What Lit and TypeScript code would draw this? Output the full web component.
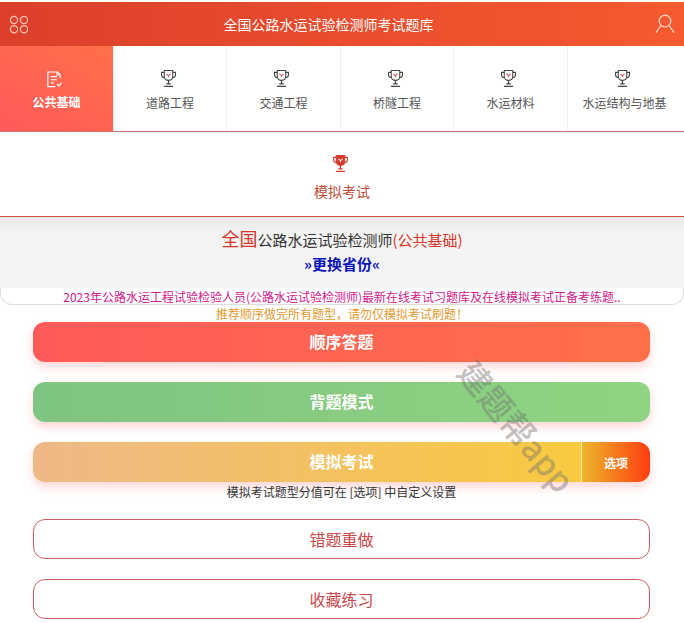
import { LitElement, html, css, svg } from "lit";
import { customElement } from "lit/decorators.js";

const trophy = (stroke: string, mark: string, fill = "none") => html`<svg class="trophy" viewBox="0 0 18 20" width="17" height="19" fill="none" stroke=${stroke} stroke-width="1.1">
  ${svg`<path d="M4.5 1.5h9v6.2c0 2.6-2 4.3-4.5 4.3s-4.5-1.7-4.5-4.3z" fill=${fill}/>
  <path d="M4.5 3.5H1.6v2.4c0 1.7 1.3 3 3.4 3.2M13.5 3.5h2.9v2.4c0 1.7-1.3 3-3.4 3.2"/>
  <path d="M9 12v3.2M6.6 15.6h4.8M4.2 18.4h9.6" stroke-width="1.3"/>
  <path d="M6.9 5.2 9 7.2l2.1-2M9 7.2v1.6" stroke=${mark} stroke-width="1.1"/>`}
</svg>`;

const docIcon = html`<svg class="trophy" viewBox="0 0 18 18" width="17" height="17" fill="none" stroke="#fff" stroke-width="1.2">
  <path d="M15 7.5V3.8L12 1H2v15.6h8"/><path d="M11.6 1.2v3h3.2M5 6h6.5M5 9.3h6.5M5 12.6h3.5"/><path d="m11.6 13.8 1.9 1.9 3-3.2" stroke-width="1.3"/>
</svg>`;

@customElement("app-root")
export class AppRoot extends LitElement {
  static styles = css`
    :host { display: block; position: relative; width: 684px; height: 623px; overflow: hidden; background: #fff;
      font-family: "Microsoft YaHei", "Noto Sans CJK SC", "Noto Sans", sans-serif; color: #333; }
    .header { margin-top: 2px; height: 44px; display: grid; grid-template-columns: 57px 1fr 57px; align-items: center;
      background: linear-gradient(90deg, #dc3f2a, #f55a30); color: #fff; }
    .apps { margin-left: 9px; display: block; }
    .user { justify-self: end; margin-right: 9px; display: block; }
    .title { font-size: 14px; text-align: center; margin-right: 27px; white-space: nowrap; }
    .tabs { display: grid; grid-template-columns: 113px 113px 114px 113px 114px 1fr; border-bottom: 1px solid #c8716c; }
    .tab { height: 85px; box-sizing: border-box; display: flex; flex-direction: column; align-items: center; padding-top: 23px;
      font-size: 12px; color: #555; border-left: 1px solid #eee; }
    .tab:last-child { padding-right: 3px; }
    .tab .lbl { margin-top: 6px; line-height: 18px; }
    .trophy { margin-right: 4px; display: block; flex: none; }
    .tab.active { padding-top: 25px; background: linear-gradient(30deg, #ff5a5c, #ff7048); color: #fff; font-weight: 700; border-left: 0; }
    .tab.active .lbl { margin-top: 5px; }
    .exam { height: 85px; box-sizing: border-box; display: flex; flex-direction: column; align-items: center; padding-top: 22px;
      border-bottom: 1px solid #cf5244; color: #bf4a38; font-size: 14px; }
    .exam .lbl { margin-top: 8px; line-height: 20px; }
    .banner { height: 71px; box-sizing: border-box; padding-top: 8px; text-align: center;
      background: linear-gradient(180deg, #e8e8e8, #f3f3f3 14px, #f5f5f5); }
    .name { font-size: 15px; line-height: 26px; color: #333; }
    .name b { font-weight: 400; color: #d8352a; }
    .name .big { font-size: 18px; }
    .change { font-size: 15px; font-weight: 700; line-height: 20px; margin-top: 1px; color: #0c14b8; }
    .notice { height: 17px; box-sizing: border-box; background: #fff; border: 1px solid #ddd; border-top: 0;
      border-radius: 0 0 12px 12px; text-align: center; font-size: 12px; line-height: 17px; white-space: nowrap;
      color: #d0208c; }
    .tip { margin-top: 1px; height: 16px; text-align: center; font-size: 12px; line-height: 16px; color: #e59a30; }
    .actions { margin: 0 34px 0 33px; display: flex; flex-direction: column; }
    .btn { height: 40px; box-sizing: border-box; border-radius: 12px; display: flex; align-items: center; justify-content: center;
      font-size: 16px; overflow: hidden; }
    .fill { color: #fff; font-weight: 700; box-shadow: 0 5px 10px rgba(255, 90, 90, .25); margin-bottom: 20px; padding-bottom: 2px; }
    .red { background: linear-gradient(90deg, #ff5a5a, #ff7049); }
    .green { background: linear-gradient(90deg, #7fc480, #90d482); }
    .split { margin-bottom: 0; padding-bottom: 0; align-items: stretch; justify-content: flex-start; }
    .main { flex: 1; padding: 0 0 2px 69px; display: flex; align-items: center; justify-content: center; background: linear-gradient(90deg, #eeb887, #f8ca3f); }
    .opt { width: 68px; flex: none; display: flex; align-items: center; justify-content: center; font-size: 12px;
      border-left: 1px solid #fbe6a8; background: linear-gradient(90deg, #edb62a, #ff3d10); }
    .hint { height: 37px; text-align: center; font-size: 12px; line-height: 20px; color: #333; white-space: pre; }
    .line { border: 1px solid #c75f62; color: #c9484c; margin-bottom: 20px; font-weight: 400; }
    .mark { position: absolute; left: 517px; top: 426px; transform: translate(-50%, -50%) rotate(50deg); font-size: 33px; font-weight: 500; line-height: 1;
      color: rgba(110, 110, 110, .42); white-space: nowrap; pointer-events: none; }
  `;

  render() {
    const names = ["道路工程", "交通工程", "桥隧工程", "水运材料", "水运结构与地基"];
    return html`
      <div class="header">
        <svg class="apps" viewBox="0 0 20 19" width="20" height="19" fill="none" stroke="#f8c4b4" stroke-width="1.2">
          <circle cx="5" cy="5" r="3.6"/><circle cx="15" cy="5" r="3.6"/><circle cx="5" cy="14.2" r="3.6"/><circle cx="15" cy="14.2" r="3.6"/>
        </svg>
        <div class="title">全国公路水运试验检测师考试题库</div>
        <svg class="user" viewBox="0 0 20 20" width="20" height="20" fill="none" stroke="#fbd5c8" stroke-width="1.3">
          <circle cx="10" cy="7" r="5.8"/><path d="M6 11.5 1 18.6M14 11.5l5 7.1"/>
        </svg>
      </div>
      <div class="tabs">
        <div class="tab active">${docIcon}<span class="lbl">公共基础</span></div>
        ${names.map((n) => html`<div class="tab">${trophy("#444", "#d9475a")}<span class="lbl">${n}</span></div>`)}
      </div>
      <div class="exam">${trophy("#d63c2c", "#fff", "#d63c2c")}<span class="lbl">模拟考试</span></div>
      <div class="banner">
        <div class="name"><b class="big">全国</b>公路水运试验检测师<b>(公共基础)</b></div>
        <div class="change">»更换省份«</div>
      </div>
      <div class="notice">2023年公路水运工程试验检验人员(公路水运试验检测师)最新在线考试习题库及在线模拟考试正备考练题..</div>
      <div class="tip">推荐顺序做完所有题型，请勿仅模拟考试刷题！</div>
      <div class="actions">
        <div class="btn fill red">顺序答题</div>
        <div class="btn fill green">背题模式</div>
        <div class="btn fill split"><div class="main">模拟考试</div><div class="opt">选项</div></div>
        <div class="hint">模拟考试题型分值可在 [选项] 中自定义设置</div>
        <div class="btn line">错题重做</div>
        <div class="btn line">收藏练习</div>
      </div>
      <div class="mark">建题帮app</div>
    `;
  }
}
